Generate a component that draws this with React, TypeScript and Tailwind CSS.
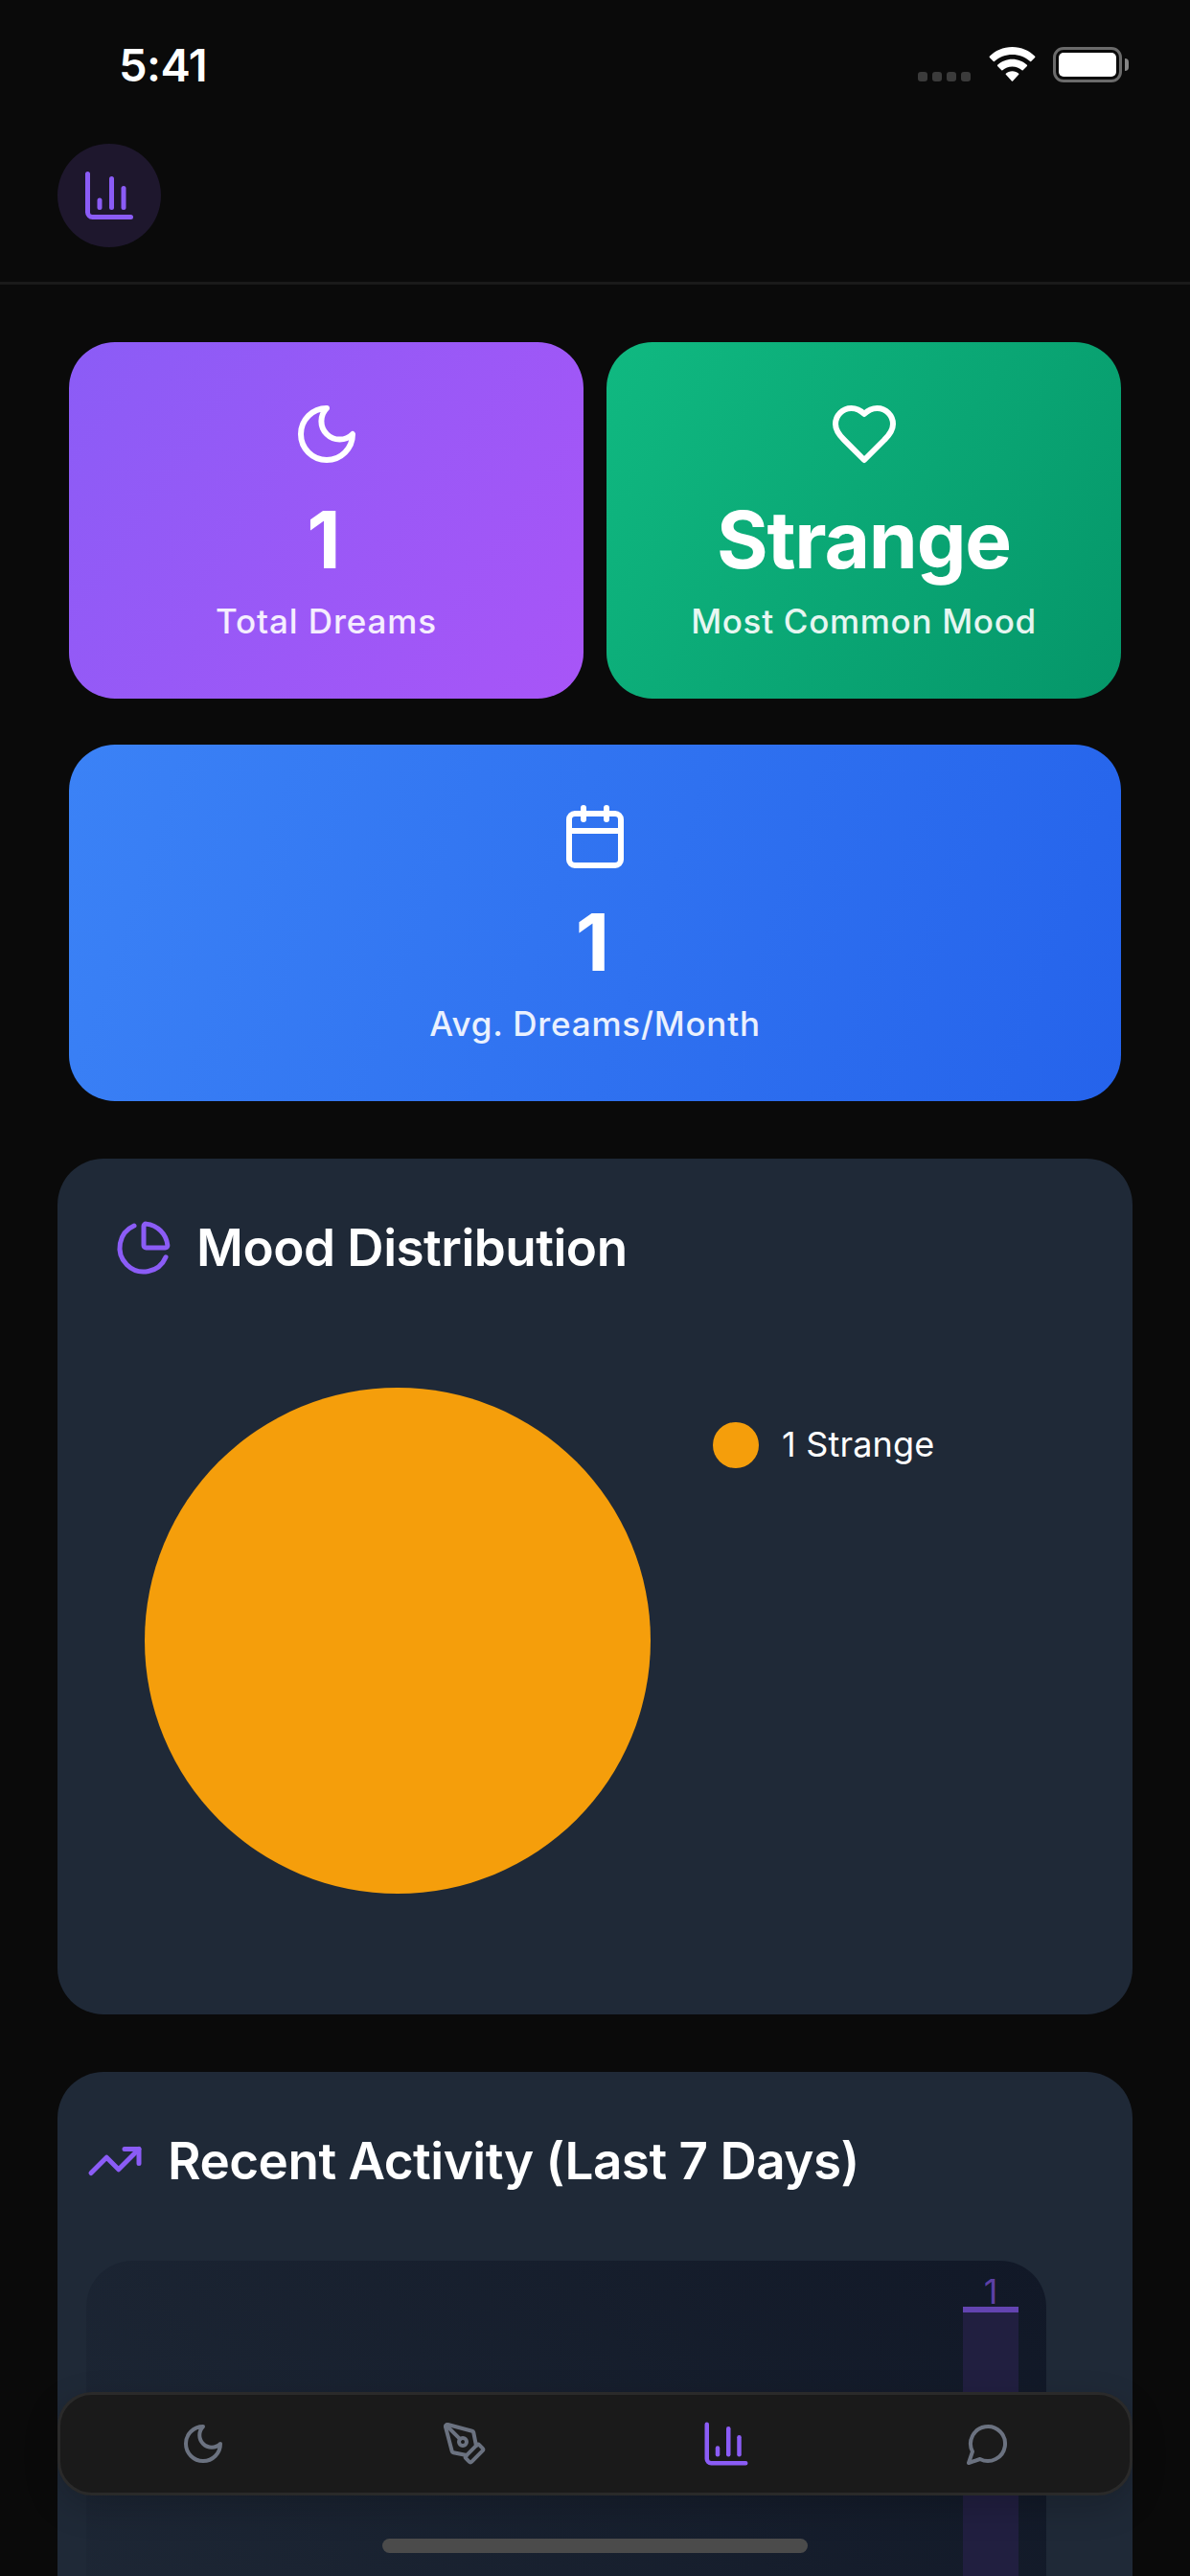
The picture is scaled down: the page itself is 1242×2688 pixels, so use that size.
import type { ReactNode } from "react";
import { Calendar, ChartColumn, ChartPie, PenTool, TrendingUp } from "lucide-react";

type IconProps = { size: number; className?: string };

function Stroke({ size, className, d }: IconProps & { d: string }) {
  return (
    <svg
      width={size}
      height={size}
      viewBox="0 0 24 24"
      fill="none"
      stroke="currentColor"
      strokeWidth={2}
      strokeLinecap="round"
      strokeLinejoin="round"
      className={className}
    >
      <path d={d} />
    </svg>
  );
}

const MoonIcon = (p: IconProps) => <Stroke {...p} d="M12 3a6 6 0 0 0 9 9 9 9 0 1 1-9-9Z" />;
const HeartIcon = (p: IconProps) => (
  <Stroke
    {...p}
    d="M19 14c1.49-1.46 3-3.21 3-5.5A5.5 5.5 0 0 0 16.5 3c-1.76 0-3 .5-4.5 2-1.5-1.5-2.74-2-4.5-2A5.5 5.5 0 0 0 2 8.5c0 2.3 1.5 4.05 3 5.5l7 7Z"
  />
);
const ChatIcon = (p: IconProps) => <Stroke {...p} d="M7.9 20A9 9 0 1 0 4 16.1L2 22Z" />;

function StatusBar() {
  return (
    <div className="flex h-[132px] items-start justify-between pl-[124px] pr-[64px] pt-[48px]">
      <div className="h-10 text-[47px] font-semibold leading-10 tracking-[-0.5px]">5:41</div>
      <div className="flex h-[38px] pt-px">
        <div className="mr-[19px] flex gap-[5px] pt-[26px]">
          {[0, 1, 2, 3].map((i) => (
            <span key={i} className="size-[10px] rounded-[3px] bg-[#3b3b3b]" />
          ))}
        </div>
        <svg width="49" height="36" viewBox="0 0 49 36" className="mr-[18px]" fill="#fff">
          <path d="M24.500 0C34 0 42.500 3.800 48.200 9.800Q48.700 10.300 48.200 10.900L44.200 15Q43.700 15.500 43.100 15C38 10.500 31.500 8 24.500 8S11 10.500 5.900 15Q5.300 15.500 4.800 15L.8 10.900Q.3 10.300 .8 9.800C6.500 3.800 15 0 24.500 0Z" />
          <path d="M24.500 12.700C30.500 12.700 35.900 15 39.900 18.800Q40.400 19.300 39.900 19.900L35.700 24.200Q35.200 24.700 34.600 24.200C31.900 21.900 28.400 20.400 24.500 20.400S17.100 21.900 14.400 24.200Q13.800 24.700 13.300 24.200L9.100 19.900Q8.600 19.300 9.100 18.800C13.100 15 18.500 12.700 24.500 12.700Z" />
          <path d="M24.500 25.200C27.200 25.200 29.500 26.100 31.200 27.700Q31.700 28.200 31.200 28.800L25.100 35.400Q24.500 36 23.900 35.400L17.800 28.800Q17.300 28.200 17.800 27.700C19.500 26.100 21.800 25.200 24.500 25.200Z" />
        </svg>
        <div className="h-[37px] w-[72px] rounded-[11px] border-[3px] border-[#6b6b6b] p-[3px]">
          <div className="h-full w-full rounded-[5px] bg-white" />
        </div>
        <div className="ml-[3px] mt-3 h-[13px] w-1 rounded-r-full bg-[#858585]" />
      </div>
    </div>
  );
}

function StatCard({
  icon,
  value,
  label,
  className,
}: {
  icon: ReactNode;
  value: ReactNode;
  label: ReactNode;
  className: string;
}) {
  return (
    <div className={`flex h-[372px] flex-col items-center rounded-[48px] pt-[60px] ${className}`}>
      {icon}
      <div className="mt-[25px] h-[100px] text-[82px] font-bold leading-[100px]">{value}</div>
      <div className="mt-[13px] h-[43px] text-[35px] font-medium leading-[43px] text-white/90">
        {label}
      </div>
    </div>
  );
}

function NavItem({ children }: { children: ReactNode }) {
  return <div className="flex flex-1 items-center justify-center text-[#6b7280]">{children}</div>;
}

export default function App() {
  return (
    <div className="relative h-[2688px] w-[1242px] overflow-hidden bg-[#0a0a0a] font-['Inter',sans-serif] text-white">
      <header className="h-[297px] border-b-[3px] border-[#1a1a1a]">
        <StatusBar />
        <div className="ml-[60px] mt-[18px] flex size-[108px] items-center justify-center rounded-full bg-[#1e172d]">
          <ChartColumn size={60} className="text-[#8b5cf6]" />
        </div>
      </header>

      <main className="px-[60px] pt-[60px]">
        <div className="grid grid-cols-2 gap-x-6 gap-y-12 px-3">
          <StatCard
            className="bg-[linear-gradient(124.7deg,#8b5cf6,#a855f7)]"
            icon={<MoonIcon size={72} />}
            value={<span className="pr-[5px]">1</span>}
            label={<span className="tracking-[0.9px]">Total Dreams</span>}
          />
          <StatCard
            className="bg-[linear-gradient(124.7deg,#10b981,#059669)]"
            icon={<HeartIcon size={72} />}
            value={<span className="tracking-[-1.2px]">Strange</span>}
            label={<span className="tracking-[0.7px]">Most Common Mood</span>}
          />
          <StatCard
            className="col-span-2 bg-[linear-gradient(108.7deg,#3b82f6,#2563eb)]"
            icon={<Calendar size={72} />}
            value={<span className="pr-[5px]">1</span>}
            label={<span className="tracking-[0.8px]">Avg. Dreams/Month</span>}
          />
        </div>

        <section className="mt-[60px] h-[893px] rounded-[48px] bg-[#1f2937] px-[60px] pt-[63px]">
          <div className="flex h-[60px] items-center gap-[25px]">
            <ChartPie size={60} className="text-[#8b5cf6]" />
            <h2 className="text-[53px] font-semibold leading-[60px] tracking-[-0.5px]">
              Mood Distribution
            </h2>
          </div>
          <div className="mt-[116px] flex items-start pl-[31px]">
            <div className="size-[528px] rounded-full bg-[#f59e0b]" />
            <div className="ml-[65px] mt-9 flex h-12 items-center gap-6">
              <span className="size-12 rounded-full bg-[#f59e0b]" />
              <span className="text-[36px] leading-[46px] tracking-[0.2px] pb-0.5">1 Strange</span>
            </div>
          </div>
        </section>

        <section className="mt-[60px] h-[893px] rounded-[48px] bg-[#1f2937] px-[30px] pt-[63px]">
          <div className="flex h-[60px] items-center gap-[25px]">
            <TrendingUp size={60} className="text-[#8b5cf6]" />
            <h2 className="text-[53px] font-semibold leading-[60px] tracking-[-0.5px]">
              Recent Activity (Last 7 Days)
            </h2>
          </div>
          <div className="mt-[74px] flex h-[660px] w-[1002px] justify-end rounded-[48px] bg-[linear-gradient(56.6deg,#1f2937,#111827)] pr-[29px] pt-[18px]">
            <div className="flex w-[58px] flex-col items-center">
              <span className="h-[30px] text-[36px] leading-[28px] text-[#5d40a6]">1</span>
              <div className="h-[540px] w-full border-t-[6px] border-[#6344b1] bg-[#211f40]" />
            </div>
          </div>
        </section>
      </main>

      <nav className="absolute left-[60px] top-[2496px] flex h-[108px] w-[1122px] rounded-[36px] border-[3px] border-[#2a2a2a] bg-[#1a1a1a] px-3 shadow-[0_12px_36px_rgba(0,0,0,0.2)]">
        <NavItem>
          <MoonIcon size={48} />
        </NavItem>
        <NavItem>
          <PenTool size={48} />
        </NavItem>
        <NavItem>
          <ChartColumn size={54} className="text-[#8b5cf6]" />
        </NavItem>
        <NavItem>
          <ChatIcon size={48} />
        </NavItem>
      </nav>
      <div className="absolute left-[399px] top-[2649px] h-[15px] w-[444px] rounded-full bg-[#4b4b4b]" />
    </div>
  );
}
